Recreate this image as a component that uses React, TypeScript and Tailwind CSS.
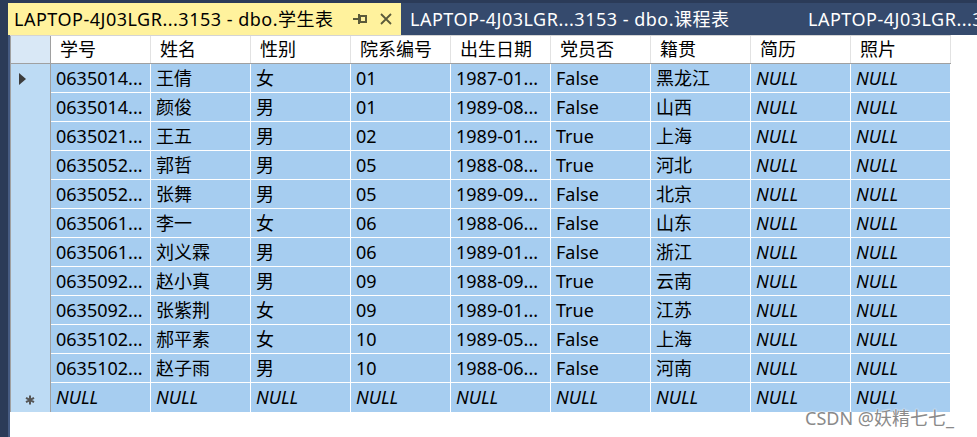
import React from "react";

const columns = ["学号", "姓名", "性别", "院系编号", "出生日期", "党员否", "籍贯", "简历", "照片"];

// rows as shown in the grid (long values already truncated)
const rows = [
  ["0635014...", "王倩", "女", "01", "1987-01...", "False", "黑龙江"],
  ["0635014...", "颜俊", "男", "01", "1989-08...", "False", "山西"],
  ["0635021...", "王五", "男", "02", "1989-01...", "True", "上海"],
  ["0635052...", "郭哲", "男", "05", "1988-08...", "True", "河北"],
  ["0635052...", "张舞", "男", "05", "1989-09...", "False", "北京"],
  ["0635061...", "李一", "女", "06", "1988-06...", "False", "山东"],
  ["0635061...", "刘义霖", "男", "06", "1989-01...", "False", "浙江"],
  ["0635092...", "赵小真", "男", "09", "1988-09...", "True", "云南"],
  ["0635092...", "张紫荆", "女", "09", "1989-01...", "True", "江苏"],
  ["0635102...", "郝平素", "女", "10", "1989-05...", "False", "上海"],
  ["0635102...", "赵子雨", "男", "10", "1988-06...", "False", "河南"],
];

function PinIcon() {
  return (
    <svg width="14" height="12" viewBox="0 0 14 12" className="text-[#5a5a3a]">
      <rect x="0" y="5" width="5" height="2" fill="currentColor" />
      <rect x="5" y="1" width="2" height="10" fill="currentColor" />
      <rect x="7" y="3" width="6" height="6" fill="none" stroke="currentColor" strokeWidth="2" />
    </svg>
  );
}

function CloseIcon() {
  return (
    <svg width="12" height="12" viewBox="0 0 12 12" className="text-[#5a5a3a]">
      <path d="M1 1 L11 11 M11 1 L1 11" stroke="currentColor" strokeWidth="1.8" />
    </svg>
  );
}

function Cell({ value, italic }: { value: string; italic?: boolean }) {
  return (
    <div className="w-[100px] h-full border-r border-white pl-[5px] flex items-center whitespace-nowrap overflow-hidden">
      <span className={italic ? "italic" : ""}>{value}</span>
    </div>
  );
}

export default function App() {
  return (
    <div
      className="w-[977px] h-[437px] bg-[#2b3b58] overflow-hidden relative pt-[3px] text-black"
      style={{ fontFamily: '"Noto Sans", "Noto Sans CJK SC", sans-serif' }}
    >
      {/* Document tabs */}
      <div className="h-[32px] ml-[8px] flex bg-[#354a6d] text-[18px] tracking-[0.5px]">
        <div className="w-[393px] shrink-0 bg-[#fff29d] flex items-center pl-[6px] whitespace-nowrap">
          <span className="w-[339px] shrink-0">LAPTOP-4J03LGR...3153 - dbo.学生表</span>
          <PinIcon />
          <span className="ml-[13px]">
            <CloseIcon />
          </span>
        </div>
        <div className="w-[407px] shrink-0 flex items-center pl-[9px] text-white whitespace-nowrap">
          LAPTOP-4J03LGR...3153 - dbo.课程表
        </div>
        <div className="flex-1 flex items-center text-white whitespace-nowrap overflow-hidden">
          LAPTOP-4J03LGR...3153 - dbo.学生表
        </div>
      </div>

      <div className="flex h-[402px]">
        <div className="w-[8px] bg-[#2b3b58]" />
        <div className="w-[2px] bg-[#465b82]" />
        <div className="flex-1 bg-white text-[18px]">
          <div className="w-[941px] border-t border-[#d4d4d4]">
            {/* Header */}
            <div className="flex h-[28px] border-b border-[#a0a0a0]">
              <div className="w-[41px] bg-[#d9e8f6] border-l border-r border-[#a0a0a0]" />
              {columns.map((c) => (
                <div
                  key={c}
                  className="w-[100px] h-full border-r border-[#e2e2e2] pl-[9px] flex items-center whitespace-nowrap"
                >
                  {c}
                </div>
              ))}
            </div>

            {/* Rows */}
            {rows.map((r, i) => (
              <div key={i} className="flex h-[29px]">
                <div className="w-[41px] bg-[#bddbf4] border-l border-r border-[#a0a0a0] flex items-center pl-[7px]">
                  {i === 0 && (
                    <svg width="9" height="14" viewBox="0 0 9 14">
                      <path d="M1 1 L8 7 L1 13 Z" fill="#3c3c3c" />
                    </svg>
                  )}
                </div>
                <div className="flex bg-[#a6cdf0] border-b border-white h-full">
                  {r.map((v, j) => (
                    <Cell key={j} value={v} />
                  ))}
                  <Cell value="NULL" italic />
                  <Cell value="NULL" italic />
                </div>
              </div>
            ))}

            {/* New row */}
            <div className="flex h-[29px]">
              <div className="w-[41px] bg-[#bddbf4] border-l border-r border-[#a0a0a0] flex items-center pl-[14px] pt-[4px]">
                <svg width="10" height="10" viewBox="0 0 10 10">
                  <path d="M5 0.5 V9.5 M1 2.8 L9 7.2 M9 2.8 L1 7.2" stroke="#555" strokeWidth="2" />
                </svg>
              </div>
              <div className="flex bg-[#a6cdf0] h-full">
                {columns.map((c) => (
                  <Cell key={c} value="NULL" italic />
                ))}
              </div>
            </div>
          </div>
        </div>
      </div>

      {/* watermark */}
      <div
        className="absolute left-[805px] top-[405px] text-[18px] text-[#8a8a8a] whitespace-nowrap"
        style={{ textShadow: "0 0 2px #fff, 0 0 2px #fff" }}
      >
        CSDN @妖精七七_
      </div>
    </div>
  );
}
